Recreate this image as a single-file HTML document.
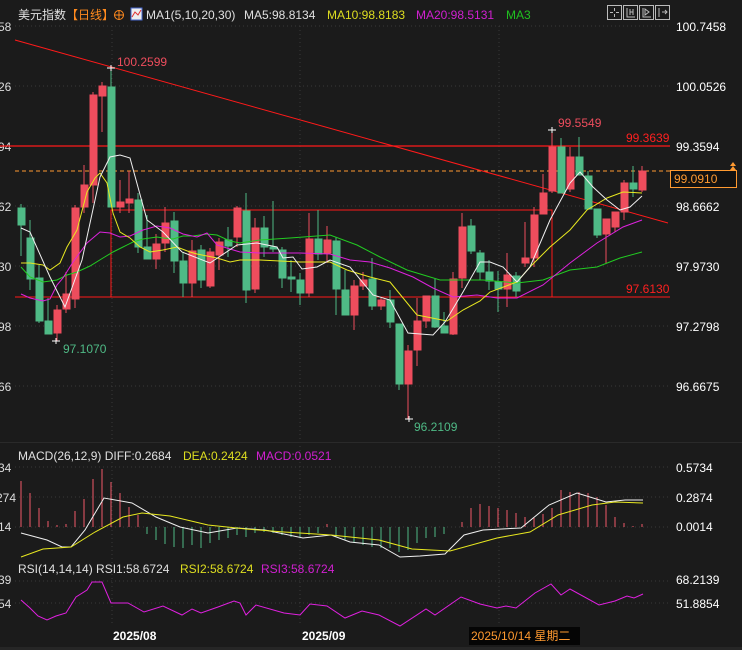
<!DOCTYPE html>
<html><head><meta charset="utf-8"><style>
html,body{margin:0;padding:0;background:#1b1b1b;width:742px;height:650px;overflow:hidden}
svg{display:block}
text{font-family:"Liberation Sans","Noto Sans CJK SC",sans-serif;font-size:12px}
</style></head><body>
<svg width="742" height="650" viewBox="0 0 742 650" xmlns="http://www.w3.org/2000/svg">
<rect width="742" height="650" fill="#1b1b1b"/>
<g stroke="#3a3a3a" stroke-dasharray="1,3" stroke-width="1">
<line x1="15" y1="26" x2="668" y2="26"/><line x1="15" y1="86" x2="668" y2="86"/><line x1="15" y1="146" x2="668" y2="146"/><line x1="15" y1="206" x2="668" y2="206"/><line x1="15" y1="266" x2="668" y2="266"/><line x1="15" y1="326" x2="668" y2="326"/><line x1="15" y1="386" x2="668" y2="386"/>
<line x1="15" y1="467" x2="668" y2="467"/><line x1="15" y1="497" x2="668" y2="497"/><line x1="15" y1="527" x2="668" y2="527"/>
<line x1="15" y1="581" x2="668" y2="581"/><line x1="15" y1="603" x2="668" y2="603"/>
<line x1="112" y1="26" x2="112" y2="625"/><line x1="300" y1="26" x2="300" y2="625"/><line x1="499" y1="26" x2="499" y2="625"/>
</g>
<text x="18" y="19" fill="#e0e0e0">美元指数</text>
<text x="66" y="19" fill="#ff8a1e">【日线】</text>
<circle cx="119" cy="15" r="4.5" fill="none" stroke="#ff8a1e"/><line x1="114" y1="15" x2="124" y2="15" stroke="#ff8a1e"/><line x1="119" y1="10" x2="119" y2="20" stroke="#ff8a1e"/>
<rect x="131" y="8" width="11" height="12" fill="#eee" stroke="#4466cc"/><polyline points="132,17 135,12 138,15 141,10" fill="none" stroke="#e03030"/>
<text x="146" y="19" fill="#e0e0e0">MA1(5,10,20,30)</text>
<text x="244" y="19" fill="#e0e0e0">MA5:98.8134</text>
<text x="327" y="19" fill="#dede20">MA10:98.8183</text>
<text x="416" y="19" fill="#d020d0">MA20:98.5131</text>
<text x="506" y="19" fill="#20c020">MA3</text>
<g fill="none" stroke="#bbb" stroke-width="1">
<rect x="607.5" y="5.5" width="14" height="14"/><rect x="623.5" y="5.5" width="14" height="14"/><rect x="639.5" y="5.5" width="14" height="14"/><rect x="655.5" y="5.5" width="14" height="14"/>
<path d="M614.5 8v3M614.5 14v3M610 12.5h3M616 12.5h3M627 8v9h8M630 9v6M633 9v6M630 12h3M643 8v9h8M645 9v6l4-3z M659 8v9M662 12h5M665 10l2 2-2 2"/>
</g>
<text x="676" y="31" fill="#fff">100.7458</text>
<text x="676" y="91" fill="#fff">100.0526</text>
<text x="676" y="151" fill="#fff">99.3594</text>
<text x="676" y="211" fill="#fff">98.6662</text>
<text x="676" y="271" fill="#fff">97.9730</text>
<text x="676" y="331" fill="#fff">97.2798</text>
<text x="676" y="391" fill="#fff">96.6675</text>
<g fill="#ddd"><text x="-2" y="31">58</text><text x="-2" y="91">26</text><text x="-2" y="151">94</text><text x="-2" y="211">62</text><text x="-2" y="271">30</text><text x="-2" y="331">98</text><text x="-2" y="391">66</text></g>
<line x1="0" y1="146" x2="670" y2="146" stroke="#ff1a1a" stroke-width="1.3"/>
<line x1="15" y1="171" x2="670" y2="171" stroke="#ff9a30" stroke-dasharray="4,3"/>
<polyline points="111,297 111,210 552,210 552,297" fill="none" stroke="#ff1a1a"/>
<line x1="15" y1="297" x2="670" y2="297" stroke="#ff1a1a"/>
<line x1="15" y1="40" x2="668" y2="223" stroke="#ff1a1a"/>
<text x="626" y="142" fill="#ff2020">99.3639</text>
<text x="626" y="293" fill="#ff2020">97.6130</text>
<rect x="670.5" y="170.5" width="66" height="17" fill="#111" stroke="#ff9a30"/>
<text x="674" y="183" fill="#ff9a30">99.0910</text>
<path d="M733 162l-3 4h6z M733 166l-3 4h6z" fill="#ff9a30"/>
<g stroke="#4fba86" fill="#4fba86">
<line x1="21" y1="204" x2="21" y2="256"/><rect x="18" y="208" width="7" height="17"/>
<line x1="30" y1="220" x2="30" y2="290"/><rect x="27" y="238" width="7" height="41"/>
<line x1="39" y1="265" x2="39" y2="323"/><rect x="36" y="278" width="7" height="43"/>
<line x1="48" y1="298" x2="48" y2="334"/><rect x="45" y="321" width="7" height="13"/>
<line x1="111" y1="68" x2="111" y2="207"/><rect x="108" y="87" width="7" height="120"/>
<line x1="138" y1="193" x2="138" y2="253"/><rect x="135" y="200" width="7" height="47"/>
<line x1="147" y1="215" x2="147" y2="259"/><rect x="144" y="247" width="7" height="12"/>
<line x1="174" y1="212" x2="174" y2="273"/><rect x="171" y="221" width="7" height="40"/>
<line x1="183" y1="252" x2="183" y2="297"/><rect x="180" y="261" width="7" height="22"/>
<line x1="201" y1="245" x2="201" y2="288"/><rect x="198" y="250" width="7" height="30"/>
<line x1="228" y1="227" x2="228" y2="257"/><rect x="225" y="240" width="7" height="6"/>
<line x1="246" y1="193" x2="246" y2="303"/><rect x="243" y="211" width="7" height="79"/>
<line x1="264" y1="216" x2="264" y2="257"/><rect x="261" y="228" width="7" height="19"/>
<line x1="273" y1="201" x2="273" y2="252"/><rect x="270" y="247" width="7" height="2"/>
<line x1="282" y1="247" x2="282" y2="288"/><rect x="279" y="250" width="7" height="28"/>
<line x1="291" y1="260" x2="291" y2="292"/><rect x="288" y="277" width="7" height="2"/>
<line x1="300" y1="273" x2="300" y2="305"/><rect x="297" y="280" width="7" height="13"/>
<line x1="318" y1="210" x2="318" y2="260"/><rect x="315" y="239" width="7" height="15"/>
<line x1="336" y1="237" x2="336" y2="315"/><rect x="333" y="241" width="7" height="48"/>
<line x1="345" y1="270" x2="345" y2="315"/><rect x="342" y="290" width="7" height="25"/>
<line x1="372" y1="258" x2="372" y2="310"/><rect x="369" y="279" width="7" height="27"/>
<line x1="390" y1="290" x2="390" y2="328"/><rect x="387" y="300" width="7" height="22"/>
<line x1="399" y1="324" x2="399" y2="390"/><rect x="396" y="324" width="7" height="60"/>
<line x1="435" y1="279" x2="435" y2="328"/><rect x="432" y="296" width="7" height="31"/>
<line x1="444" y1="312" x2="444" y2="333"/><rect x="441" y="326" width="7" height="7"/>
<line x1="471" y1="219" x2="471" y2="254"/><rect x="468" y="226" width="7" height="25"/>
<line x1="480" y1="250" x2="480" y2="280"/><rect x="477" y="253" width="7" height="19"/>
<line x1="489" y1="260" x2="489" y2="290"/><rect x="486" y="272" width="7" height="9"/>
<line x1="498" y1="271" x2="498" y2="312"/><rect x="495" y="282" width="7" height="7"/>
<line x1="516" y1="272" x2="516" y2="297"/><rect x="513" y="276" width="7" height="15"/>
<line x1="561" y1="138" x2="561" y2="193"/><rect x="558" y="147" width="7" height="46"/>
<line x1="579" y1="137" x2="579" y2="175"/><rect x="576" y="157" width="7" height="18"/>
<line x1="588" y1="171" x2="588" y2="209"/><rect x="585" y="176" width="7" height="33"/>
<line x1="597" y1="209" x2="597" y2="238"/><rect x="594" y="209" width="7" height="26"/>
<line x1="633" y1="166" x2="633" y2="197"/><rect x="630" y="183" width="7" height="6"/>
</g>
<g stroke="#ee4d5d" fill="#ee4d5d">
<line x1="57" y1="305" x2="57" y2="341"/><rect x="54" y="310" width="7" height="23"/>
<line x1="66" y1="272" x2="66" y2="313"/><rect x="63" y="294" width="7" height="15"/>
<line x1="75" y1="205" x2="75" y2="308"/><rect x="72" y="208" width="7" height="91"/>
<line x1="84" y1="165" x2="84" y2="213"/><rect x="81" y="185" width="7" height="22"/>
<line x1="93" y1="92" x2="93" y2="203"/><rect x="90" y="95" width="7" height="90"/>
<line x1="102" y1="82" x2="102" y2="132"/><rect x="99" y="86" width="7" height="10"/>
<line x1="120" y1="180" x2="120" y2="213"/><rect x="117" y="202" width="7" height="5"/>
<line x1="129" y1="171" x2="129" y2="213"/><rect x="126" y="199" width="7" height="4"/>
<line x1="156" y1="234" x2="156" y2="269"/><rect x="153" y="244" width="7" height="15"/>
<line x1="165" y1="207" x2="165" y2="252"/><rect x="162" y="223" width="7" height="20"/>
<line x1="192" y1="240" x2="192" y2="297"/><rect x="189" y="251" width="7" height="32"/>
<line x1="210" y1="248" x2="210" y2="288"/><rect x="207" y="252" width="7" height="34"/>
<line x1="219" y1="238" x2="219" y2="270"/><rect x="216" y="242" width="7" height="13"/>
<line x1="237" y1="206" x2="237" y2="247"/><rect x="234" y="208" width="7" height="29"/>
<line x1="255" y1="218" x2="255" y2="293"/><rect x="252" y="228" width="7" height="61"/>
<line x1="309" y1="213" x2="309" y2="297"/><rect x="306" y="239" width="7" height="54"/>
<line x1="327" y1="226" x2="327" y2="263"/><rect x="324" y="240" width="7" height="13"/>
<line x1="354" y1="280" x2="354" y2="330"/><rect x="351" y="286" width="7" height="29"/>
<line x1="363" y1="272" x2="363" y2="290"/><rect x="360" y="280" width="7" height="6"/>
<line x1="381" y1="297" x2="381" y2="310"/><rect x="378" y="300" width="7" height="6"/>
<line x1="408" y1="345" x2="408" y2="419"/><rect x="405" y="351" width="7" height="33"/>
<line x1="417" y1="298" x2="417" y2="366"/><rect x="414" y="321" width="7" height="29"/>
<line x1="426" y1="296" x2="426" y2="328"/><rect x="423" y="296" width="7" height="25"/>
<line x1="453" y1="272" x2="453" y2="335"/><rect x="450" y="279" width="7" height="55"/>
<line x1="462" y1="213" x2="462" y2="288"/><rect x="459" y="227" width="7" height="51"/>
<line x1="507" y1="253" x2="507" y2="307"/><rect x="504" y="275" width="7" height="14"/>
<line x1="525" y1="222" x2="525" y2="267"/><rect x="522" y="258" width="7" height="5"/>
<line x1="534" y1="207" x2="534" y2="267"/><rect x="531" y="215" width="7" height="43"/>
<line x1="543" y1="174" x2="543" y2="210"/><rect x="540" y="193" width="7" height="21"/>
<line x1="552" y1="130" x2="552" y2="193"/><rect x="549" y="147" width="7" height="44"/>
<line x1="570" y1="147" x2="570" y2="192"/><rect x="567" y="157" width="7" height="32"/>
<line x1="606" y1="219" x2="606" y2="263"/><rect x="603" y="219" width="7" height="15"/>
<line x1="615" y1="212" x2="615" y2="232"/><rect x="612" y="212" width="7" height="15"/>
<line x1="624" y1="180" x2="624" y2="220"/><rect x="621" y="183" width="7" height="29"/>
<line x1="642" y1="166" x2="642" y2="192"/><rect x="639" y="171" width="7" height="19"/>
</g>
<g fill="none" stroke-width="1">
<polyline stroke="#22cc22" points="21,267 30,277 43,282 57,280 67,275 77,272 90,266 103,258 113,252 123,247 133,242 143,239 157,237 163,238 173,239 183,236 193,236 207,234 217,235 230,241 240,243 260,240 290,238 330,235 357,245 380,257 407,270 440,280 483,280 517,283 543,280 570,270 597,267 620,258 642,252"/>
<polyline stroke="#dd22dd" points="21,294 30,298 43,301 50,299 57,285 63,278 73,262 87,243 100,232 110,233 120,237 130,236 143,230 157,226 170,228 183,234 197,237 207,233 217,245 230,249 240,252 260,253 300,253 330,254 350,260 370,262 390,268 413,277 433,288 453,297 477,295 497,298 517,298 543,285 570,263 597,243 623,227 642,220"/>
<polyline stroke="#e8e820" points="21,263 30,263 43,265 50,270 60,263 67,247 77,230 87,192 95,178 100,173 107,183 113,213 120,232 130,238 140,247 150,252 163,250 177,247 190,252 197,254 217,258 230,262 240,260 260,260 300,262 330,262 347,270 370,277 390,282 417,315 447,321 463,310 480,301 490,292 517,282 530,267 550,247 570,230 587,210 607,198 623,192 642,193"/>
<polyline stroke="#f0f0f0" points="21,228 30,232 50,277 65,307 82,260 100,177 110,157 120,155 130,158 147,220 163,232 182,252 210,263 237,245 257,243 277,247 283,258 293,257 302,269 317,267 330,260 350,267 373,295 390,300 408,333 433,335 445,322 463,292 480,262 490,262 503,267 517,282 530,267 550,220 570,183 580,172 593,187 607,200 620,210 630,207 642,196"/>
</g>
<g stroke="#fff"><path d="M107 68h8M111 65v6M52 341h8M56 338v6M405 419h8M409 416v6M548 130h8M552 127v6"/></g>
<text x="117" y="66" fill="#ee4d5d">100.2599</text>
<text x="63" y="353" fill="#4fba86">97.1070</text>
<text x="414" y="431" fill="#4fba86">96.2109</text>
<text x="558" y="127" fill="#ee4d5d">99.5549</text>
<line x1="0" y1="442.5" x2="742" y2="442.5" stroke="#2a2a2a"/>
<text x="18" y="460" fill="#e0e0e0">MACD(26,12,9) DIFF:0.2684</text>
<text x="183" y="460" fill="#dede20">DEA:0.2424</text>
<text x="256" y="460" fill="#d020d0">MACD:0.0521</text>
<text x="676" y="472" fill="#fff">0.5734</text>
<text x="676" y="502" fill="#fff">0.2874</text>
<text x="676" y="531" fill="#fff">0.0014</text>
<g fill="#ddd"><text x="-2" y="472">34</text><text x="-4" y="502">274</text><text x="-2" y="531">14</text></g>
<path stroke="#f05a6a" d="M21 527V481M30 527V493M39 527V508M48 527V521M57 527V525M66 527V524M75 527V511M84 527V499M93 527V479M102 527V469M111 527V482M120 527V493M129 527V507M138 527V515M327 527V524M462 527V522M471 527V508M480 527V504M489 527V506M498 527V508M507 527V510M516 527V513M525 527V517M534 527V518M543 527V514M552 527V508M561 527V490M570 527V492M579 527V492M588 527V493M597 527V497M606 527V505M615 527V517M624 527V523M633 527V526M642 527V524"/>
<path stroke="#4fba86" d="M147 527V534M156 527V540M165 527V544M174 527V547M183 527V548M192 527V545M201 527V548M210 527V543M219 527V540M228 527V538M237 527V535M246 527V537M255 527V533M264 527V532M273 527V533M282 527V535M291 527V537M300 527V537M309 527V535M318 527V533M336 527V537M345 527V540M354 527V543M363 527V545M372 527V547M381 527V548M390 527V548M399 527V552M408 527V550M417 527V543M426 527V538M435 527V537M444 527V534"/>
<polyline fill="none" stroke="#f0f0f0" points="21,533 47,540 62,547 71,547 85,530 104,498 132,503 156,517 180,527 208,533 237,528 265,530 303,538 331,535 350,542 379,545 400,557 420,556 445,554 464,535 483,530 521,528 549,505 577,493 606,502 625,500 643,500"/>
<polyline fill="none" stroke="#e8e820" points="21,557 43,549 71,547 95,532 123,517 142,513 170,516 208,525 246,529 284,532 331,535 379,540 412,549 450,551 497,538 530,532 558,515 592,505 615,502 643,503"/>
<text x="18" y="573" fill="#e0e0e0">RSI(14,14,14) RSI1:58.6724</text>
<text x="180" y="573" fill="#dede20">RSI2:58.6724</text>
<text x="261" y="573" fill="#d020d0">RSI3:58.6724</text>
<text x="676" y="584" fill="#fff">68.2139</text>
<text x="676" y="608" fill="#fff">51.8854</text>
<g fill="#ddd"><text x="-2" y="584">39</text><text x="-2" y="608">54</text></g>
<polyline fill="none" stroke="#e020e0" points="21,600 30,608 38,616 47,620 56,616 66,613 76,597 87,590 92,582 102,582 111,603 128,603 144,612 163,606 182,615 192,609 201,613 218,607 234,601 240,603 246,615 256,605 284,613 300,615 310,604 327,606 345,618 362,611 379,615 400,626 426,609 435,615 461,597 480,604 497,608 506,606 516,608 535,593 551,584 561,595 570,589 599,605 615,601 627,596 634,598 643,594"/>
<text x="113" y="640" fill="#fff" font-weight="bold">2025/08</text>
<text x="302" y="640" fill="#fff" font-weight="bold">2025/09</text>
<rect x="469" y="627" width="111" height="18" fill="#050505"/>
<text x="471" y="640" fill="#ff9a30">2025/10/14 星期二</text>
<rect x="0" y="647" width="742" height="3" fill="#262626"/>
</svg>
</body></html>
